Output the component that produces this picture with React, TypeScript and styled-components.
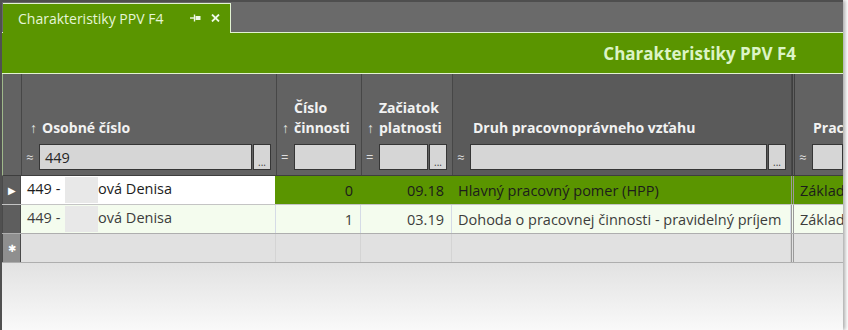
import React from 'react'
import styled, { createGlobalStyle } from 'styled-components'

const GREEN = '#5a9500'
const LIGHT_LINE = '#e2f3d2'
const COLS = '19px 255px 85px 91px 339px 1fr'

const GlobalStyle = createGlobalStyle`
  html, body {
    margin: 0;
    padding: 0;
    background: #ffffff;
    overflow: hidden;
  }
  body {
    font-family: 'Open Sans', 'Noto Sans', sans-serif;
  }
`

const Window = styled.div`
  width: 843px;
  height: 330px;
  box-sizing: border-box;
  display: flex;
  flex-direction: column;
  border-left: 2px solid #505050;
  box-shadow: 2px 0 4px rgba(0, 0, 0, 0.35);
  overflow: hidden;
`

const TabStrip = styled.div`
  height: 32px;
  box-sizing: border-box;
  background: #6a6a6a;
  border-top: 2px solid #4e4e4e;
  display: flex;
  align-items: flex-end;
  padding-left: 1px;
`

const Tab = styled.div`
  width: 228px;
  height: 30px;
  margin-bottom: -1px;
  box-sizing: border-box;
  position: relative;
  z-index: 1;
  background: ${GREEN};
  border-top: 1px solid ${LIGHT_LINE};
  border-right: 1px solid ${LIGHT_LINE};
  display: flex;
  align-items: center;
  padding: 0 10px 1px 15px;
  color: #e6f6d8;
  font-size: 14px;
`

const TabTitle = styled.span`
  flex: 1;
`

const TabIcons = styled.div`
  display: flex;
  align-items: center;
  gap: 10px;
  color: #eef8e6;
`

const Banner = styled.div`
  height: 42px;
  box-sizing: border-box;
  background: ${GREEN};
  border-top: 1px solid ${LIGHT_LINE};
  border-bottom: 1px solid ${LIGHT_LINE};
  display: flex;
  align-items: center;
  justify-content: flex-end;
  padding-right: 47px;
`

const BannerTitle = styled.span`
  color: #dcf4c6;
  font-size: 17px;
  font-weight: 700;
`

const HeaderRow = styled.div`
  display: grid;
  grid-template-columns: ${COLS};
  height: 102px;
  box-sizing: border-box;
  border-bottom: 1px solid #3e3e3e;
  border-left: 1px solid #9fb88a;
`

const HeaderCell = styled.div<{ dark?: boolean; split?: boolean }>`
  box-sizing: border-box;
  background: ${({ dark }) => (dark ? '#5a5a5a' : '#626262')};
  border-right: ${({ split }) => (split ? 'none' : '1px solid #474747')};
  border-left: ${({ split }) => (split ? '3px double #3f3f3f' : 'none')};
  display: flex;
  flex-direction: column;
  justify-content: flex-end;
  padding-bottom: 5px;
  min-width: 0;
  overflow: hidden;
`

const Label = styled.div<{ padLeft: number }>`
  display: flex;
  padding-left: ${({ padLeft }) => padLeft}px;
  margin-bottom: 6px;
  color: #f2f2f2;
  font-size: 14px;
  font-weight: 700;
  line-height: 20px;
  white-space: nowrap;
`

const Arrow = styled.span`
  width: 12px;
  flex: none;
  align-self: flex-end;
  font-weight: 400;
  font-size: 14px;
  color: #e4e4e4;
`

const LabelLines = styled.div`
  display: flex;
  flex-direction: column;
`

const FilterRow = styled.div<{ open?: boolean }>`
  display: flex;
  height: 26px;
  padding: 0 ${({ open }) => (open ? 0 : 5)}px 0 4px;
`

const Op = styled.span`
  width: 13px;
  flex: none;
  display: flex;
  align-items: center;
  color: #dedede;
  font-size: 13px;
`

const FilterInput = styled.div`
  flex: 1;
  min-width: 0;
  box-sizing: border-box;
  background: #d6d6d6;
  border: 1px solid #363636;
  display: flex;
  align-items: center;
  padding-left: 5px;
  color: #262626;
  font-size: 14.5px;
`

const Ellipsis = styled.div`
  width: 18px;
  flex: none;
  margin-left: 1px;
  box-sizing: border-box;
  background: #d6d6d6;
  border: 1px solid #363636;
  display: flex;
  align-items: flex-end;
  justify-content: center;
  padding-bottom: 2px;
  color: #3a3a3a;
  font-size: 10px;
  line-height: 10px;
`

type RowKind = 'selected' | 'normal' | 'new'

const DataRow = styled.div<{ kind: RowKind }>`
  display: grid;
  grid-template-columns: ${COLS};
  height: 29px;
  box-sizing: border-box;
  border-bottom: 1px solid ${({ kind }) => (kind === 'selected' ? '#c4c4c4' : '#aeaeae')};
  background: ${({ kind }) =>
    kind === 'selected' ? GREEN : kind === 'new' ? '#e1e1e1' : '#f4fcee'};
  color: ${({ kind }) => (kind === 'selected' ? '#1c1c1c' : '#3c3c3c')};
  font-size: 14.5px;
`

const Indicator = styled.div<{ kind: RowKind }>`
  background: ${({ kind }) => (kind === 'new' ? '#8f8f8f' : '#5e5e5e')};
  border-left: 1px solid #4a4a4a;
  border-right: 1px solid #4a4a4a;
  display: flex;
  align-items: center;
  justify-content: center;
  color: #ffffff;
  font-size: 10px;
`

const Cell = styled.div<{ align?: 'left' | 'right'; white?: boolean; split?: boolean; line?: string }>`
  box-sizing: border-box;
  min-width: 0;
  overflow: hidden;
  white-space: nowrap;
  display: flex;
  align-items: center;
  justify-content: ${({ align }) => (align === 'right' ? 'flex-end' : 'flex-start')};
  padding: ${({ align }) => (align === 'right' ? '0 7px 0 0' : '0 0 0 6px')};
  background: ${({ white }) => (white ? '#ffffff' : 'transparent')};
  border-right: ${({ split, line }) => (split ? 'none' : `1px solid ${line}`)};
  border-left: ${({ split }) => (split ? '3px double #9a9a9a' : 'none')};
`

const Redact = styled.span`
  display: inline-block;
  width: 33px;
  height: 26px;
  margin-left: 1px;
  vertical-align: middle;
  background: #e8e8e8;
  filter: blur(0.6px);
`

const Footer = styled.div`
  flex: 1;
  background: linear-gradient(#e2e2e2, #f9f9f9);
`

const PinIcon = () => (
  <svg width="11" height="8" viewBox="0 0 11 8">
    <path d="M0 4h4" stroke="currentColor" strokeWidth="1.4" />
    <path d="M4.5 0.5v7" stroke="currentColor" strokeWidth="1.4" />
    <rect x="5.5" y="2" width="5" height="4" fill="currentColor" />
  </svg>
)

const CloseIcon = () => (
  <svg width="9" height="8" viewBox="0 0 9 8">
    <path d="M1 0.5l7 7M8 0.5l-7 7" stroke="currentColor" strokeWidth="1.8" />
  </svg>
)

interface Column {
  lines: string[]
  arrow: boolean
  padLeft: number
  op: string
  ellipsis: boolean
  value?: string
  dark?: boolean
  split?: boolean
}

const columns: Column[] = [
  { lines: ['Osobné číslo'], arrow: true, padLeft: 8, op: '≈', ellipsis: true, value: '449' },
  { lines: ['Číslo', 'činnosti'], arrow: true, padLeft: 5, op: '=', ellipsis: false },
  { lines: ['Začiatok', 'platnosti'], arrow: true, padLeft: 5, op: '=', ellipsis: true },
  { lines: ['Druh pracovnoprávneho vzťahu'], arrow: false, padLeft: 8, op: '≈', ellipsis: true, dark: true },
  { lines: ['Pracovný pomer'], arrow: false, padLeft: 6, op: '≈', ellipsis: false, split: true },
]

const rows = [
  { number: '0', start: '09.18', kind: 'Hlavný pracovný pomer (HPP)', base: 'Základný' },
  { number: '1', start: '03.19', kind: 'Dohoda o pracovnej činnosti - pravidelný príjem', base: 'Základný' },
]

const App: React.FC = () => {
  return (
    <>
      <GlobalStyle />
      <Window>
        <TabStrip>
          <Tab>
            <TabTitle>Charakteristiky PPV F4</TabTitle>
            <TabIcons>
              <PinIcon />
              <CloseIcon />
            </TabIcons>
          </Tab>
        </TabStrip>

        <Banner>
          <BannerTitle>Charakteristiky PPV F4</BannerTitle>
        </Banner>

        <HeaderRow>
          <HeaderCell />
          {columns.map((col) => (
            <HeaderCell key={col.lines.join(' ')} dark={col.dark} split={col.split}>
              <Label padLeft={col.padLeft}>
                <Arrow>{col.arrow ? '↑' : ''}</Arrow>
                <LabelLines>
                  {col.lines.map((line) => (
                    <span key={line}>{line}</span>
                  ))}
                </LabelLines>
              </Label>
              <FilterRow open={col.split}>
                <Op>{col.op}</Op>
                <FilterInput>{col.value}</FilterInput>
                {col.ellipsis && <Ellipsis>...</Ellipsis>}
              </FilterRow>
            </HeaderCell>
          ))}
        </HeaderRow>

        {rows.map((row, i) => {
          const kind: RowKind = i === 0 ? 'selected' : 'normal'
          const line = i === 0 ? GREEN : '#d5dbe6'
          return (
            <DataRow key={row.number} kind={kind}>
              <Indicator kind={kind}>{i === 0 ? '▶' : ''}</Indicator>
              <Cell white={i === 0} line={line}>
                <span>
                  449 - <Redact />ová Denisa
                </span>
              </Cell>
              <Cell align="right" line={line}>{row.number}</Cell>
              <Cell align="right" line={line}>{row.start}</Cell>
              <Cell line={line}>{row.kind}</Cell>
              <Cell split line={line}>{row.base}</Cell>
            </DataRow>
          )
        })}

        <DataRow kind="new">
          <Indicator kind="new">✱</Indicator>
          <Cell line="#d4d4d4" />
          <Cell line="#d4d4d4" />
          <Cell line="#d4d4d4" />
          <Cell line="#d4d4d4" />
          <Cell split line="#d4d4d4" />
        </DataRow>

        <Footer />
      </Window>
    </>
  )
}

export default App
